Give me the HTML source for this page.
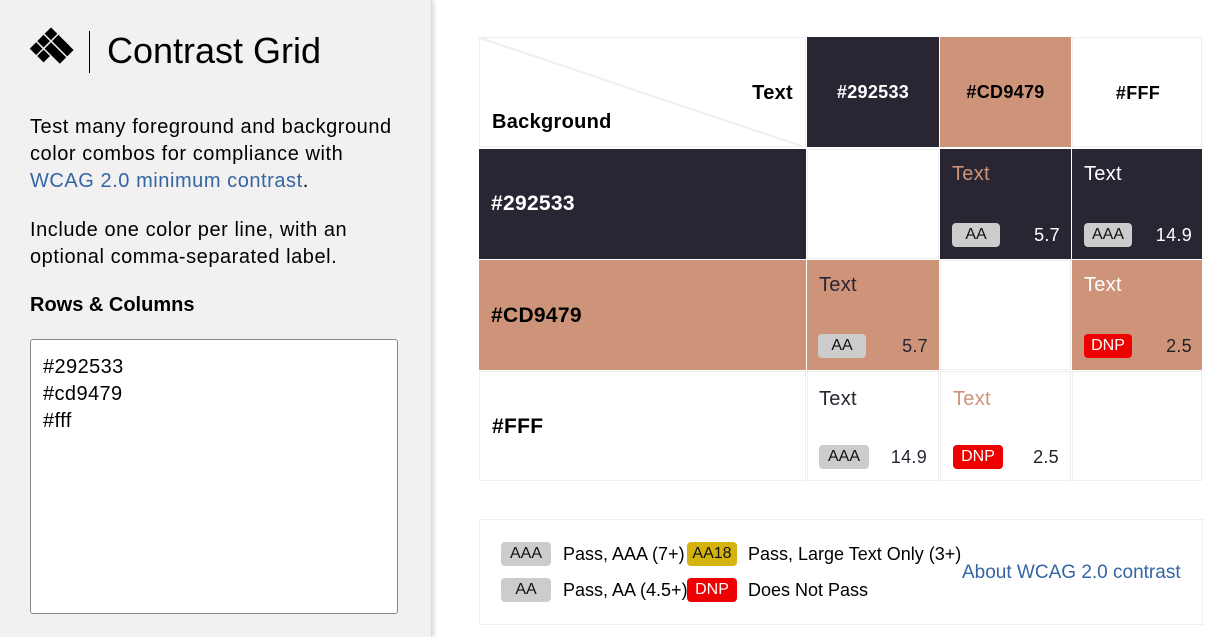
<!DOCTYPE html>
<html><head><style>
*{box-sizing:border-box;margin:0;padding:0}
body{width:1225px;height:637px;overflow:hidden;font-family:"Liberation Sans",sans-serif;background:#fff;position:relative;color:#000}
.side{position:absolute;left:0;top:0;width:432px;height:637px;background:#f2f0f0;box-shadow:2px 0 4px rgba(0,0,0,.15);border-right:1px solid #ddd}
.title{position:absolute;left:107px;top:30px;font-size:36px;letter-spacing:0}
.bar{position:absolute;left:89px;top:31px;width:1px;height:42px;background:#000}
.p{position:absolute;left:30px;font-size:20px;line-height:27px;letter-spacing:0.55px;white-space:nowrap}
a{color:#3465a4;text-decoration:none}
.ta{position:absolute;left:30px;top:339px;width:368px;height:275px;background:#fff;border:1px solid #888;border-radius:3px;padding:14px 12px;font-size:20px;line-height:27px;letter-spacing:0.4px}
.c{position:absolute;font-size:19px;letter-spacing:0.3px}
.b{font-weight:bold}
.badge{position:absolute;font-size:16px;line-height:24px;height:24px;border-radius:4px;text-align:center;background:#ccc;color:#111}
.dnp{background:#e00;color:#fff}
</style></head><body>
<div class="side">
<svg style="position:absolute;left:28px;top:27px" width="46" height="46" viewBox="0 0 46 46"><g transform="rotate(45 23 23)" fill="#000">
<rect x="7" y="7" width="9" height="9"/><rect x="7" y="17.5" width="9" height="9"/><rect x="7" y="28" width="9" height="9"/>
<rect x="17.5" y="7" width="21.5" height="9"/><rect x="17.5" y="17.5" width="21.5" height="9"/><rect x="17.5" y="28" width="9" height="9"/>
</g></svg>
<div class="bar"></div>
<div class="title">Contrast Grid</div>
<div class="p" style="top:114px">Test many foreground and background<br>color combos for compliance with<br><a>WCAG 2.0 minimum contrast</a>.</div>
<div class="p" style="top:217px">Include one color per line, with an<br>optional comma-separated label.</div>
<div class="p b" style="top:292px;letter-spacing:0">Rows &amp; Columns</div>
<div class="ta">#292533<br>#cd9479<br>#fff</div>
</div>

<div style="position:absolute;left:479px;top:37px;width:327px;height:110px;border:1px solid #eee;overflow:hidden">
<svg width="327" height="110" style="position:absolute;left:0;top:0"><line x1="0" y1="0" x2="327" y2="110" stroke="#eee" stroke-width="2"/></svg>
<div class="c b" style="right:12px;top:44px;font-size:20px">Text</div>
<div class="c b" style="left:12px;top:73px;font-size:20px">Background</div>
</div>
<div style="position:absolute;left:807px;top:37px;width:132px;height:110px;background:#292533;color:#fff" ><div class="c b" style="width:132px;text-align:center;top:45px;font-size:18px">#292533</div></div>
<div style="position:absolute;left:940px;top:37px;width:131px;height:110px;background:#cd9479"><div class="c b" style="width:131px;text-align:center;top:45px;font-size:18px">#CD9479</div></div>
<div style="position:absolute;left:1072px;top:37px;width:130px;height:110px;border:1px solid #eee"><div class="c b" style="width:130px;text-align:center;top:45px;font-size:18px">#FFF</div></div>

<div style="position:absolute;left:479px;top:149px;width:327px;height:110px;background:#292533;color:#fff"><div class="c b" style="left:12px;top:43px;font-size:21px">#292533</div></div>
<div style="position:absolute;left:807px;top:149px;width:132px;height:110px;border:1px solid #eee"></div>
<div style="position:absolute;left:940px;top:149px;width:131px;height:110px;background:#292533;color:#cd9479">
<div class="c" style="left:12px;top:14px;font-size:20px">Text</div><div class="badge" style="left:12px;top:74px;width:48px">AA</div><div class="c" style="right:11px;top:76px;color:#fff;font-size:18px">5.7</div></div>
<div style="position:absolute;left:1072px;top:149px;width:130px;height:110px;background:#292533;color:#fff">
<div class="c" style="left:12px;top:14px;font-size:20px">Text</div><div class="badge" style="left:12px;top:74px;width:48px">AAA</div><div class="c" style="right:10px;top:76px;font-size:18px">14.9</div></div>

<div style="position:absolute;left:479px;top:260px;width:327px;height:110px;background:#cd9479"><div class="c b" style="left:12px;top:44px;font-size:21px">#CD9479</div></div>
<div style="position:absolute;left:807px;top:260px;width:132px;height:110px;background:#cd9479;color:#292533">
<div class="c" style="left:12px;top:14px;font-size:20px">Text</div><div class="badge" style="left:11px;top:74px;width:48px">AA</div><div class="c" style="right:11px;top:76px;font-size:18px">5.7</div></div>
<div style="position:absolute;left:940px;top:260px;width:131px;height:110px;border:1px solid #eee"></div>
<div style="position:absolute;left:1072px;top:260px;width:130px;height:110px;background:#cd9479;color:#fff">
<div class="c" style="left:12px;top:14px;font-size:20px">Text</div><div class="badge dnp" style="left:12px;top:74px;width:48px">DNP</div><div class="c" style="right:10px;top:76px;color:#222;font-size:18px">2.5</div></div>

<div style="position:absolute;left:479px;top:371px;width:327px;height:110px;border:1px solid #eee"><div class="c b" style="left:12px;top:43px;font-size:21px">#FFF</div></div>
<div style="position:absolute;left:807px;top:371px;width:132px;height:110px;border:1px solid #eee;color:#292533">
<div class="c" style="left:11px;top:16px;font-size:20px">Text</div><div class="badge" style="left:11px;top:73px;width:50px">AAA</div><div class="c" style="right:11px;top:75px;font-size:18px">14.9</div></div>
<div style="position:absolute;left:940px;top:371px;width:131px;height:110px;border:1px solid #eee;color:#cd9479">
<div class="c" style="left:12px;top:16px;font-size:20px">Text</div><div class="badge dnp" style="left:12px;top:73px;width:50px">DNP</div><div class="c" style="right:11px;top:75px;color:#222;font-size:18px">2.5</div></div>
<div style="position:absolute;left:1072px;top:371px;width:130px;height:110px;border:1px solid #eee"></div>

<div style="position:absolute;left:479px;top:519px;width:724px;height:106px;border:1px solid #eee">
<div class="badge" style="left:21px;top:22px;width:50px">AAA</div>
<div class="c" style="left:83px;top:24px;font-size:18px;letter-spacing:0">Pass, AAA (7+)</div>
<div class="badge" style="left:207px;top:22px;width:50px;background:#d4b30f">AA18</div>
<div class="c" style="left:268px;top:24px;font-size:18px;letter-spacing:0">Pass, Large Text Only (3+)</div>
<div class="badge" style="left:21px;top:58px;width:50px">AA</div>
<div class="c" style="left:83px;top:60px;font-size:18px;letter-spacing:0">Pass, AA (4.5+)</div>
<div class="badge dnp" style="left:207px;top:58px;width:50px">DNP</div>
<div class="c" style="left:268px;top:60px;font-size:18px;letter-spacing:0">Does Not Pass</div>
<div class="c" style="left:482px;top:42px;font-size:19px;letter-spacing:0;color:#3465a4">About WCAG 2.0 contrast</div>
</div>
</body></html>
